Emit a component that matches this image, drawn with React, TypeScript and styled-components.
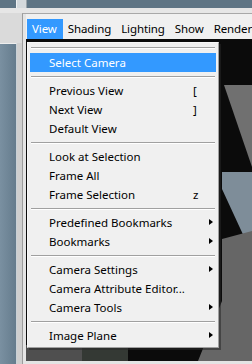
import React from 'react'
import styled, { createGlobalStyle } from 'styled-components'

type Entry =
  | { kind: 'item'; label: string; shortcut?: string; submenu?: boolean; active?: boolean }
  | { kind: 'sep' }

const entries: Entry[] = [
  { kind: 'item', label: 'Select Camera', active: true },
  { kind: 'sep' },
  { kind: 'item', label: 'Previous View', shortcut: '[' },
  { kind: 'item', label: 'Next View', shortcut: ']' },
  { kind: 'item', label: 'Default View' },
  { kind: 'sep' },
  { kind: 'item', label: 'Look at Selection' },
  { kind: 'item', label: 'Frame All' },
  { kind: 'item', label: 'Frame Selection', shortcut: 'z' },
  { kind: 'sep' },
  { kind: 'item', label: 'Predefined Bookmarks', submenu: true },
  { kind: 'item', label: 'Bookmarks', submenu: true },
  { kind: 'sep' },
  { kind: 'item', label: 'Camera Settings', submenu: true },
  { kind: 'item', label: 'Camera Attribute Editor...' },
  { kind: 'item', label: 'Camera Tools', submenu: true },
  { kind: 'sep' },
  { kind: 'item', label: 'Image Plane', submenu: true },
]

const menus = ['View', 'Shading', 'Lighting', 'Show', 'Renderer']

// viewport origin is at page (26, 42)
const ViewportScene = () => (
  <svg width="226" height="322" viewBox="0 0 226 322">
    <rect width="226" height="322" fill="#0b0b0b" />
    <polygon points="198,46 226,46 226,128" fill="#707070" />
    <polygon points="196,133 226,133 226,215 196,150" fill="#7e8d99" />
    <polygon points="196,200 226,192 226,322 172,322 196,262" fill="#666666" />
    <rect x="0" y="306" width="56" height="16" fill="#4f4f4f" />
    <rect x="56" y="306" width="46" height="16" fill="#343934" />
  </svg>
)

export default function App() {
  return (
    <>
      <GlobalStyle />
      <Screen>
        <TopStrip>
          <SlateTile $width="16px" />
          <StripDivider />
          <SlateTile $width="auto" />
        </TopStrip>
        <Workspace>
          <LeftColumn>
            <LeftFill />
            <SlatePanel />
          </LeftColumn>
          <RightPane>
            <MenuBar>
              {menus.map((m) => (
                <MenuTitle key={m} $open={m === 'View'}>{m}</MenuTitle>
              ))}
            </MenuBar>
            <Viewport>
              <ViewportScene />
            </Viewport>
          </RightPane>
        </Workspace>

        <Dropdown>
          <TearOff />
          {entries.map((e, i) =>
            e.kind === 'sep' ? (
              <Separator key={i} />
            ) : (
              <Item key={i} $active={e.active}>
                <ItemLabel>{e.label}</ItemLabel>
                {e.shortcut && <Shortcut>{e.shortcut}</Shortcut>}
                {e.submenu && <Arrow />}
              </Item>
            )
          )}
        </Dropdown>
      </Screen>
    </>
  )
}

const GlobalStyle = createGlobalStyle`
  html, body {
    margin: 0;
    padding: 0;
    background: #dcdcdc;
  }
  body {
    font-family: "Noto Sans", "Open Sans", sans-serif;
  }
`

const Screen = styled.div`
  position: relative;
  width: 252px;
  height: 364px;
  overflow: hidden;
  background: #dcdcdc;
  display: flex;
  flex-direction: column;
`

const TopStrip = styled.div`
  display: flex;
  height: 8px;
  flex-shrink: 0;
  border-bottom: 5px solid #e6e6e6;
`

const SlateTile = styled.div<{ $width: string }>`
  width: ${(p) => p.$width};
  flex: ${(p) => (p.$width === 'auto' ? 1 : 'none')};
  background: #5f7585;
`

const StripDivider = styled.div`
  width: 11px;
  background: #d4d9dc;
  border-left: 1px solid #eef0f1;
  border-right: 1px solid #9aa4aa;
  box-sizing: border-box;
`

const Workspace = styled.div`
  flex: 1;
  display: flex;
  min-height: 0;
`

const LeftColumn = styled.div`
  width: 22px;
  flex-shrink: 0;
  display: flex;
  flex-direction: column;
  background: #cfcfcf;
`

const LeftFill = styled.div`
  height: 30px;
  background: #dadada;
`

const SlatePanel = styled.div`
  flex: 1;
  width: 17px;
  box-sizing: border-box;
  background: linear-gradient(90deg, #7a90a1 0%, #657c8d 100%);
  border-right: 1px solid #c9d1d7;
  border-top: 1px solid #eeeeee;
`

const RightPane = styled.div`
  flex: 1;
  min-width: 0;
  display: flex;
  flex-direction: column;
  border-left: 1px solid #9c9c9c;
  border-top: 1px solid #a8a8a8;
  padding-left: 3px;
  background: #e4e4e4;
`

const MenuBar = styled.div`
  height: 25px;
  display: flex;
  align-items: flex-end;
  background: #f0f0f0;
  flex-shrink: 0;
  overflow: hidden;
  white-space: nowrap;
  box-sizing: border-box;
  padding-top: 4px;
`

const MenuTitle = styled.div<{ $open?: boolean }>`
  flex-shrink: 0;
  height: 20px;
  line-height: 20px;
  padding: 0 ${(p) => (p.$open ? '6px' : '5px')} 0 5px;
  margin-left: ${(p) => (p.$open ? '1px' : '0')};
  font-size: 11.5px;
  letter-spacing: -0.1px;
  color: ${(p) => (p.$open ? '#ffffff' : '#000000')};
  background: ${(p) => (p.$open ? '#3399ff' : 'transparent')};
`

const Viewport = styled.div`
  flex: 1;
  overflow: hidden;
  line-height: 0;
`

const Dropdown = styled.div`
  position: absolute;
  left: 27px;
  top: 42px;
  width: 192px;
  box-sizing: border-box;
  padding: 0 2px 2px 2px;
  background: #f0f0f0;
  border: 1px solid #f8f8f8;
  border-right-color: #a0a0a0;
  border-bottom-color: #a0a0a0;
  box-shadow: 2px 2px 0 rgba(40, 40, 40, 0.55);
`

const TearOff = styled.div`
  height: 10px;
  box-sizing: border-box;
  margin: 0 1px;
  padding-top: 4px;
  &::before {
    content: '';
    display: block;
    height: 1px;
    background: #a0a0a0;
    border-bottom: 1px solid #ffffff;
  }
`

const Item = styled.div<{ $active?: boolean }>`
  position: relative;
  height: 19px;
  display: flex;
  align-items: center;
  padding-left: 19px;
  font-size: 11.5px;
  color: ${(p) => (p.$active ? '#ffffff' : '#000000')};
  background: ${(p) => (p.$active ? '#3399ff' : 'transparent')};
  white-space: nowrap;
`

const ItemLabel = styled.span`
  flex: 1;
`

const Shortcut = styled.span`
  position: absolute;
  left: 163px;
`

const Arrow = styled.span`
  position: absolute;
  left: 179px;
  top: 6px;
  width: 0;
  height: 0;
  border-top: 3.5px solid transparent;
  border-bottom: 3.5px solid transparent;
  border-left: 4px solid #000000;
`

const Separator = styled.div`
  height: 9px;
  display: flex;
  align-items: center;
  padding: 0 1px;
  &::before {
    content: '';
    flex: 1;
    height: 1px;
    background: #a0a0a0;
    border-bottom: 1px solid #ffffff;
  }
`
